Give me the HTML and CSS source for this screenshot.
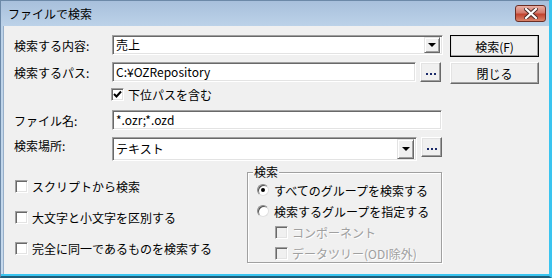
FILE: index.html
```html
<!DOCTYPE html>
<html lang="ja">
<head>
    <meta charset="UTF-8">
    <title>ファイルで検索</title>
    <link rel="stylesheet" href="styles.css">
</head>
<body>
    <div class="window">
        <div class="titlebar">
            <span class="title">ファイルで検索</span>
            <span class="close-btn">
                <svg width="14" height="11" viewBox="0 0 14 11">
                    <path d="M2 1 L12 10 M12 1 L2 10" stroke="#4a2a26" stroke-width="4" stroke-linecap="square"/>
                    <path d="M2 1 L12 10 M12 1 L2 10" stroke="#fff" stroke-width="2.2" stroke-linecap="square"/>
                </svg>
            </span>
        </div>
        <div class="client">
            <div class="top">
                <div class="form">
                    <div class="row">
                        <label class="label">検索する内容:</label>
                        <div class="field combo wide">
                            <span class="value">売上</span>
                            <span class="drop-btn"><i class="arrow"></i></span>
                        </div>
                    </div>
                    <div class="row row-gap">
                        <label class="label">検索するパス:</label>
                        <div class="field path"><span class="value">C:¥OZRepository</span></div>
                        <span class="btn dots"><i></i><i></i><i></i></span>
                    </div>
                    <div class="row check-row">
                        <span class="check checked">
                            <svg width="9" height="9" viewBox="0 0 9 9"><path d="M1 4 L3.5 6.5 L8 1.5" stroke="#000" stroke-width="2" fill="none"/></svg>
                        </span>
                        <span class="check-text">下位パスを含む</span>
                    </div>
                    <div class="row file-row">
                        <label class="label">ファイル名:</label>
                        <div class="field wide2"><span class="value">*.ozr;*.ozd</span></div>
                    </div>
                    <div class="row place-row">
                        <label class="label">検索場所:</label>
                        <div class="field combo place">
                            <span class="value">テキスト</span>
                            <span class="drop-btn tall"><i class="arrow"></i></span>
                        </div>
                        <span class="btn dots"><i></i><i></i><i></i></span>
                    </div>
                </div>
                <div class="buttons">
                    <span class="btn action default">検索(F)</span>
                    <span class="btn action">閉じる</span>
                </div>
            </div>
            <div class="bottom">
                <div class="options">
                    <div class="opt"><span class="check"></span><span class="check-text">スクリプトから検索</span></div>
                    <div class="opt"><span class="check"></span><span class="check-text">大文字と小文字を区別する</span></div>
                    <div class="opt"><span class="check"></span><span class="check-text">完全に同一であるものを検索する</span></div>
                </div>
                <fieldset class="group">
                    <legend>検索</legend>
                    <div class="radio-row"><span class="radio on"></span><span>すべてのグループを検索する</span></div>
                    <div class="radio-row"><span class="radio"></span><span>検索するグループを指定する</span></div>
                    <div class="sub disabled"><span class="check off"></span><span>コンポーネント</span></div>
                    <div class="sub disabled"><span class="check off"></span><span>データツリー(ODI除外)</span></div>
                </fieldset>
            </div>
        </div>
    </div>
</body>
</html>
```

FILE: styles.css
```css
/* Window frame */
body {
    margin: 0;
    width: 552px;
    height: 278px;
    overflow: hidden;
    font-family: "Noto Sans CJK JP", sans-serif;
    font-size: 12px;
    color: #000;
}

.window {
    width: 552px;
    height: 278px;
    box-sizing: border-box;
    display: flex;
    flex-direction: column;
    background: linear-gradient(#a7bfdb, #bcd2e8 26px, #c6d9ec);
    border-left: 1px solid #6c89a8;
    border-right: 3px solid #3ac4ef;
    border-bottom: 2px solid #1d5c78;
    box-shadow: inset 0 -2px #3ac4ef;
}

.titlebar {
    height: 26px;
    display: flex;
    align-items: center;
    justify-content: space-between;
    padding: 0 3px 0 7px;
    border-top: 1px solid #6c89a8;
    box-sizing: border-box;
}

.title {
    font-size: 12px;
    color: #000;
    margin-top: -1px;
}

.close-btn {
    width: 29px;
    height: 15px;
    margin-top: -1px;
    border: 1px solid #6b2e25;
    border-radius: 3px;
    background: linear-gradient(#e8b0a6, #d47a6c 45%, #c2432f 55%, #d9846b);
    display: flex;
    align-items: center;
    justify-content: center;
}

.client {
    flex: 1;
    margin: 0 0 2px 2px;
    background: #f0f0f0;
    border-left: 1px solid #97afc9;
    padding: 9px 0 0 10px;
}

/* Top form */
.top {
    display: flex;
}

.form {
    width: 431px;
}

.row {
    display: flex;
    align-items: center;
    height: 20px;
}

.row-gap {
    margin-top: 7px;
}

.label {
    width: 98px;
    flex-shrink: 0;
}

.field {
    height: 20px;
    box-sizing: border-box;
    background: #fff;
    border-top: 1px solid #a0a0a0;
    border-left: 1px solid #a0a0a0;
    border-right: 1px solid #fff;
    border-bottom: 1px solid #fff;
    box-shadow: inset 1px 1px #696969, inset -1px -1px #e3e3e3;
    display: flex;
    align-items: center;
    padding-left: 3px;
}

.value {
    line-height: 14px;
}

.wide {
    width: 331px;
}

.path {
    width: 304px;
}

.wide2 {
    width: 330px;
}

.place {
    width: 305px;
    height: 24px;
}

.combo {
    justify-content: space-between;
    padding-right: 2px;
}

.drop-btn {
    width: 16px;
    height: 16px;
    box-sizing: border-box;
    background: #f0f0f0;
    border-top: 1px solid #e3e3e3;
    border-left: 1px solid #e3e3e3;
    border-right: 1px solid #696969;
    border-bottom: 1px solid #696969;
    box-shadow: inset 1px 1px #fff, inset -1px -1px #a0a0a0;
    display: flex;
    align-items: center;
    justify-content: center;
}

.drop-btn.tall {
    width: 17px;
    height: 20px;
}

.arrow {
    width: 0;
    height: 0;
    border-left: 4px solid transparent;
    border-right: 4px solid transparent;
    border-top: 4px solid #000;
}

.btn {
    box-sizing: border-box;
    background: #f0f0f0;
    border-top: 1px solid #fff;
    border-left: 1px solid #fff;
    border-right: 1px solid #696969;
    border-bottom: 1px solid #696969;
    box-shadow: inset -1px -1px #a0a0a0, inset 1px 1px #e3e3e3;
    display: flex;
    align-items: center;
    justify-content: center;
}

.dots {
    width: 21px;
    height: 20px;
    margin-left: 4px;
    gap: 2px;
    padding-top: 3px;
}

.dots i {
    width: 2px;
    height: 2px;
    background: #1a2a6a;
}

.check-row {
    height: 14px;
    margin-top: 5px;
    padding-left: 97px;
}

.check {
    width: 13px;
    height: 13px;
    box-sizing: border-box;
    flex-shrink: 0;
    background: #fff;
    border-top: 1px solid #a0a0a0;
    border-left: 1px solid #a0a0a0;
    border-right: 1px solid #fff;
    border-bottom: 1px solid #fff;
    box-shadow: inset 1px 1px #696969, inset -1px -1px #e3e3e3;
    display: flex;
    align-items: center;
    justify-content: center;
}

.check.off {
    background: #f0f0f0;
}

.check-text {
    margin-left: 4px;
}

.file-row {
    margin-top: 9px;
}

.place-row {
    height: 24px;
    margin-top: 7px;
    align-items: flex-start;
}

.buttons {
    margin-left: 5px;
    display: flex;
    flex-direction: column;
    gap: 5px;
}

.action {
    width: 89px;
    height: 22px;
}

.default {
    outline: 1px solid #000;
    outline-offset: -1px;
    border-color: #fff #404040 #404040 #fff;
}

/* Bottom options */
.bottom {
    display: flex;
}

.options {
    width: 232px;
    padding: 18px 0 0 1px;
    display: flex;
    flex-direction: column;
    gap: 17px;
}

.opt {
    display: flex;
    align-items: center;
    height: 14px;
}

.group {
    margin: 4px 0 0 0;
    padding: 3px 0 0 9px;
    width: 195px;
    height: 98px;
    box-sizing: border-box;
    border: 1px solid #a0a0a0;
    box-shadow: inset 1px 1px #fff, 1px 1px #fff;
}

.group legend {
    padding: 0 1px;
    margin-left: -4px;
    background: #f0f0f0;
    line-height: 14px;
}

.radio-row, .sub {
    display: flex;
    align-items: center;
    height: 16px;
    margin-bottom: 5px;
}

.radio-row span:last-child {
    margin-left: 5px;
}

.radio {
    width: 12px;
    height: 12px;
    box-sizing: border-box;
    border-radius: 50%;
    background: #fff;
    border: 1px solid;
    border-color: #8a8a8a #e0e0e0 #e0e0e0 #8a8a8a;
    box-shadow: inset 1px 1px #505050;
    display: flex;
    align-items: center;
    justify-content: center;
}

.radio.on::after {
    content: "";
    width: 4px;
    height: 4px;
    border-radius: 50%;
    background: #000;
}

.sub {
    padding-left: 18px;
}

.sub span:last-child {
    margin-left: 4px;
}

.disabled {
    color: #a0a0a0;
    text-shadow: 1px 1px #fff;
}
```
